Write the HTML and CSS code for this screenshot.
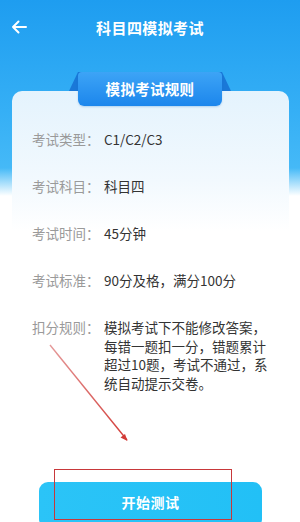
FILE: index.html
```html
<!DOCTYPE html>
<html lang="zh-CN">
<head>
    <meta charset="UTF-8">
    <meta name="viewport" content="width=device-width, initial-scale=1.0">
    <title>科目四模拟考试</title>
    <link rel="stylesheet" href="styles.css">
</head>
<body>
<div class="page">

    <!-- Top bar -->
    <header class="topbar">
        <svg class="back" width="16" height="14" viewBox="0 0 16 14">
            <path d="M15 7H2M7.5 1.5L2 7l5.5 5.5" fill="none" stroke="#fff" stroke-width="2" stroke-linecap="round" stroke-linejoin="round"/>
        </svg>
        <h1>科目四模拟考试</h1>
    </header>

    <!-- Rules card -->
    <section class="card">
        <div class="tab">模拟考试规则</div>
        <div class="row"><span class="label">考试类型：</span><span class="value">C1/C2/C3</span></div>
        <div class="row"><span class="label">考试科目：</span><span class="value">科目四</span></div>
        <div class="row"><span class="label">考试时间：</span><span class="value">45分钟</span></div>
        <div class="row"><span class="label">考试标准：</span><span class="value">90分及格，满分100分</span></div>
        <div class="row"><span class="label">扣分规则：</span><span class="value">模拟考试下不能修改答案，<br>每错一题扣一分，错题累计<br>超过10题，考试不通过，系<br>统自动提示交卷。</span></div>
    </section>

    <button class="start">开始测试</button>

    <!-- red annotation marks -->
    <svg class="mark-arrow" width="300" height="522" viewBox="0 0 300 522">
        <defs>
            <linearGradient id="redline" x1="0" y1="0" x2="1" y2="1">
                <stop offset="0" stop-color="#e59a9a"/>
                <stop offset="1" stop-color="#d23a36"/>
            </linearGradient>
        </defs>
        <path d="M50 345L127 440" stroke="url(#redline)" stroke-width="1.4" fill="none"/>
        <path d="M127.5 441L120.5 437.5L125 434Z" fill="#d23a36"/>
    </svg>
    <div class="mark-box"></div>

</div>
</body>
</html>
```

FILE: styles.css
```css
* { box-sizing: border-box; }
html, body { margin: 0; padding: 0; }
body { font-family: "Noto Sans CJK SC", "Noto Sans", sans-serif; }

.page {
    position: relative;
    width: 300px;
    height: 522px;
    overflow: hidden;
    background: linear-gradient(180deg, #1e9df0 0, #35aff5 110px, #45b9f7 168px, #ffffff 196px);
}

.topbar { height: 54px; display: flex; align-items: center; justify-content: center; position: relative; }
.topbar h1 { margin: 0; color: #fff; font-size: 15px; font-weight: 700; letter-spacing: 0.4px; }
.back { position: absolute; left: 11px; top: 20px; }

.card {
    position: relative;
    z-index: 0;
    margin: 37px 11px 0 12px;
    padding: 39px 0 0 20px;
    border-radius: 10px;
    background: linear-gradient(180deg, #e4f3fd 0, #f2f9fe 90px, #ffffff 140px);
}

.tab {
    position: absolute;
    left: 66px;
    top: -19px;
    width: 144px;
    height: 34px;
    line-height: 34px;
    text-align: center;
    color: #fff;
    font-size: 14.5px;
    font-weight: 700;
    letter-spacing: 0.3px;
    border-radius: 4px 4px 6px 6px;
    background: linear-gradient(180deg, #3da4f6, #1c86ec);
    box-shadow: 0 1px 2px rgba(20, 110, 200, 0.25);
}
.tab::before {
    content: "";
    position: absolute;
    left: -9px;
    right: -9px;
    top: 0;
    height: 19px;
    background: #1a78d8;
    clip-path: polygon(9px 0, calc(100% - 9px) 0, 100% 100%, 0 100%);
    z-index: -1;
}

.row { display: flex; font-size: 13.5px; line-height: 18.5px; margin-bottom: 28.5px; }
.label { flex: 0 0 72px; color: #9a9a9a; }
.value { color: #333; }

.start {
    display: block;
    margin: 90px 38px 0 39px;
    width: 223px;
    height: 46px;
    border: none;
    border-radius: 9px;
    background: linear-gradient(90deg, #2bc4f7, #22c0f6);
    color: #fff;
    font-family: inherit;
    font-size: 14px;
    font-weight: 700;
    letter-spacing: 0.5px;
    padding-bottom: 8px;
}

.mark-arrow { position: absolute; left: 0; top: 0; pointer-events: none; }
.mark-box {
    position: absolute;
    left: 54px;
    top: 469px;
    width: 178px;
    height: 51px;
    border: 1.5px solid #c8383a;
}
```
